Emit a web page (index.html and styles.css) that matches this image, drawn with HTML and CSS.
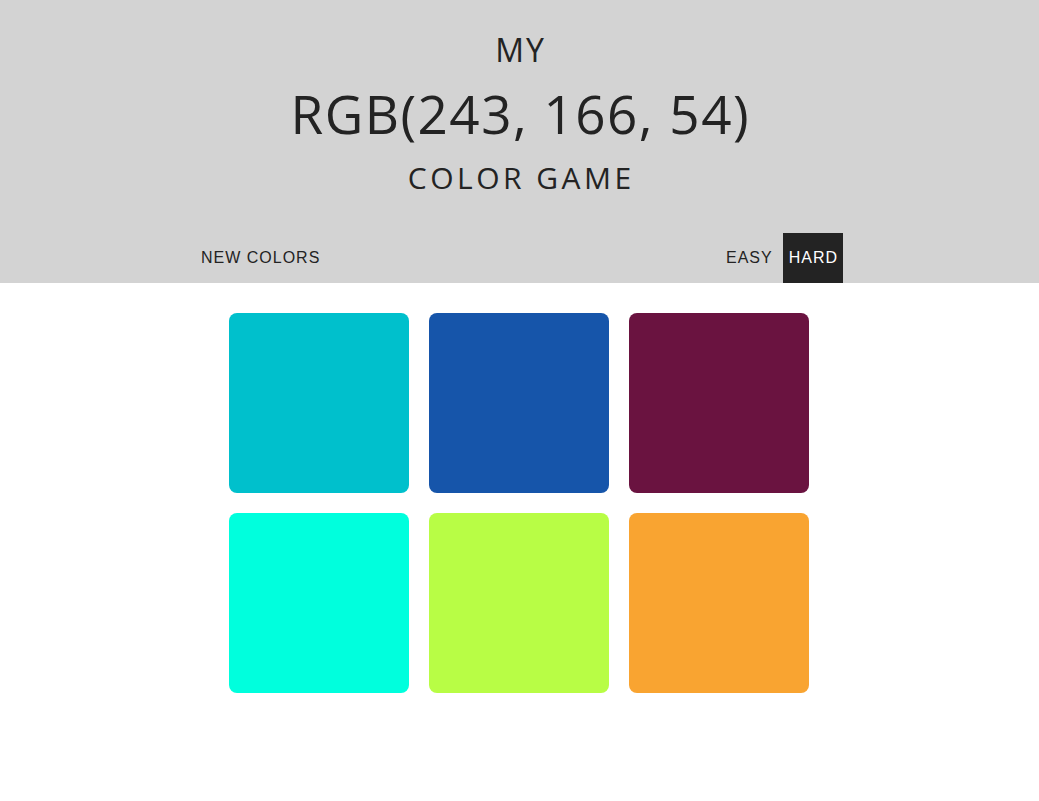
FILE: index.html
```html
<!DOCTYPE html>
<html>
<head>
<meta charset="utf-8">
<title>Color Game</title>
<link rel="stylesheet" href="styles.css">
</head>
<body>
<header class="header">
  <h1 class="title">
    <span class="title-my">MY</span>
    <span class="title-rgb">RGB(243, 166, 54)</span>
    <span class="title-game">COLOR GAME</span>
  </h1>
  <nav class="stripe">
    <button class="btn">New Colors</button>
    <span class="message"></span>
    <div class="modes">
      <button class="btn mode">Easy</button>
      <button class="btn mode selected">Hard</button>
    </div>
  </nav>
</header>
<main class="board">
  <div class="square" style="background: rgb(0, 192, 204)"></div>
  <div class="square" style="background: rgb(22, 85, 170)"></div>
  <div class="square" style="background: rgb(106, 19, 64)"></div>
  <div class="square" style="background: rgb(0, 255, 221)"></div>
  <div class="square" style="background: rgb(184, 253, 69)"></div>
  <div class="square" style="background: rgb(249, 164, 49)"></div>
</main>
</body>
</html>
```
FILE: styles.css
```css
* { box-sizing: border-box; }
body {
  margin: 0;
  background: #ffffff;
  font-family: "Open Sans", "DejaVu Sans", sans-serif;
  color: #232323;
}
.header {
  background: #d3d3d3;
}
.title {
  margin: 0;
  padding-top: 34px;
  padding-bottom: 40px;
  text-align: center;
  font-weight: 400;
  text-transform: uppercase;
  line-height: 1;
}
.title-my {
  display: block;
  font-size: 32px;
  letter-spacing: 2px;
  padding-left: 2px;
}
.title-rgb {
  display: block;
  font-size: 53px;
  letter-spacing: 1.5px;
  padding-left: 1.5px;
  margin-top: 21px;
}
.title-game {
  display: block;
  font-size: 30px;
  letter-spacing: 3.5px;
  padding-left: 3.5px;
  margin-top: 23px;
}
.stripe {
  width: 647px;
  height: 50px;
  margin: 0 auto;
  display: flex;
  align-items: stretch;
  justify-content: space-between;
}
.modes {
  display: flex;
  gap: 5px;
}
.btn {
  border: none;
  background: none;
  padding: 0 5px;
  margin: 0;
  height: 100%;
  font-family: "Liberation Sans", Arial, sans-serif;
  font-size: 16px;
  letter-spacing: 1px;
  text-transform: uppercase;
  color: #232323;
  cursor: pointer;
}
.mode {
  padding: 0 5px 0 6px;
}
.selected {
  background: #232323;
  color: #ffffff;
}
.board {
  width: 601px;
  margin: 20px auto 0;
  display: flex;
  flex-wrap: wrap;
}
.square {
  width: 180px;
  height: 180px;
  margin: 10px;
  border-radius: 8px;
}
```
